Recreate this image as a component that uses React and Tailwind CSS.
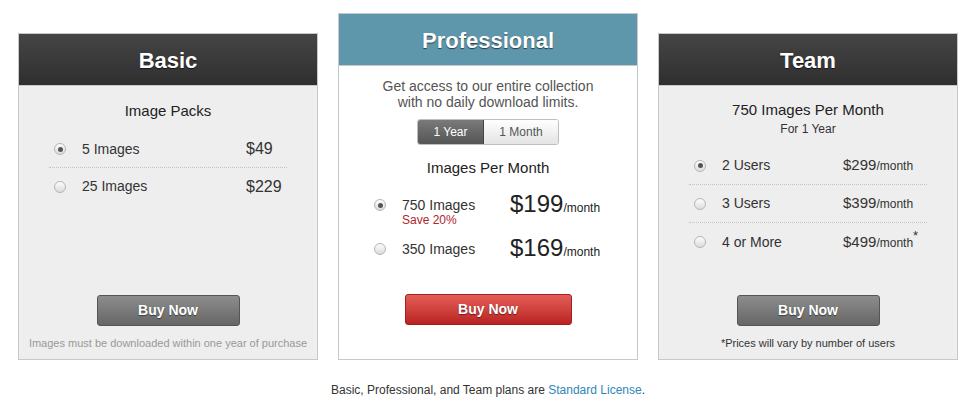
import React from "react";

const Radio = ({ checked }) => (
  <span className="flex h-[12px] w-[12px] items-center justify-center rounded-full border border-[#b5b5b5] bg-gradient-to-b from-[#fdfdfd] to-[#dcdcdc]">
    {checked && <span className="h-[5px] w-[5px] rounded-full bg-[#555]" />}
  </span>
);

const Header = ({ title, blue }) => (
  <div
    className={`flex h-[52px] items-center justify-center border-b border-[#c8c8c8] pt-[2px] text-[22px] font-bold text-white [text-shadow:0_1px_1px_rgba(0,0,0,0.6)] ${
      blue ? "bg-[#5e97ab]" : "bg-gradient-to-b from-[#454545] to-[#2f2f2f]"
    }`}
  >
    {title}
  </div>
);

const BuyButton = ({ red, className = "" }) => (
  <button
    className={`mx-auto flex h-[31px] items-center justify-center rounded-[3px] border text-[14px] font-bold text-white [text-shadow:0_1px_1px_rgba(0,0,0,0.5)] ${
      red
        ? "w-[167px] border-[#a51d1d] bg-gradient-to-b from-[#e45d58] to-[#b92121]"
        : "w-[143px] border-[#555] bg-gradient-to-b from-[#8d8d8d] to-[#666]"
    } ${className}`}
  >
    Buy Now
  </button>
);

const basicRows = [
  { label: "5 Images", price: "$49", checked: true },
  { label: "25 Images", price: "$229" },
];

const teamRows = [
  { label: "2 Users", price: "$299", checked: true },
  { label: "3 Users", price: "$399" },
  { label: "4 or More", price: "$499", star: true },
];

const App = () => {
  return (
    <div className="min-h-screen bg-white font-['Liberation_Sans',Arial,sans-serif] text-[#333]">
      <div className="flex items-end gap-[20px] pl-[18px] pt-[13px]">
        {/* Basic */}
        <div className="flex h-[327px] w-[300px] flex-col border border-[#c8c8c8] bg-[#eeeeee]">
          <Header title="Basic" />
          <div className="flex flex-1 flex-col">
            <p className="mt-[16px] text-center text-[15px] leading-[18px] text-[#222]">
              Image Packs
            </p>
            <div className="mx-[30px] mt-[11px]">
              {basicRows.map((row, i) => (
                <div
                  key={row.label}
                  className={`flex h-[37px] items-center ${
                    i < basicRows.length - 1 ? "border-b border-dotted border-[#c4c4c4]" : ""
                  }`}
                >
                  <span className="w-[33px] pl-[5px]">
                    <Radio checked={row.checked} />
                  </span>
                  <span className="w-[164px] text-[14px]">{row.label}</span>
                  <span className="text-[16px]">{row.price}</span>
                </div>
              ))}
            </div>
            <BuyButton className="mt-auto" />
            <p className="mb-[9px] mt-[11px] text-center text-[11px] leading-[13px] text-[#999]">
              Images must be downloaded within one year of purchase
            </p>
          </div>
        </div>

        {/* Professional */}
        <div className="flex h-[347px] w-[300px] flex-col border border-[#c8c8c8] bg-white">
          <Header title="Professional" blue />
          <div className="flex flex-1 flex-col">
            <p className="mt-[12px] text-center text-[14px] leading-[16px] text-[#555]">
              Get access to our entire collection
              <br />
              with no daily download limits.
            </p>
            <div className="mx-auto mt-[9px] flex h-[26px] w-[142px] overflow-hidden rounded-[3px] border border-[#bdbdbd] text-[12px]">
              <span className="flex w-[66px] items-center justify-center border-r border-[#444] bg-gradient-to-b from-[#7a7a7a] to-[#555] text-white">
                1 Year
              </span>
              <span className="flex flex-1 items-center justify-center bg-gradient-to-b from-[#ffffff] to-[#e4e4e4] text-[#555]">
                1 Month
              </span>
            </div>
            <p className="mt-[14px] text-center text-[15px] leading-[18px] text-[#222]">
              Images Per Month
            </p>
            <div className="ml-[35px] mt-[20px] flex flex-col gap-[14px]">
              <div className="flex items-start">
                <span className="mt-[2px] w-[28px]">
                  <Radio checked />
                </span>
                <div className="w-[108px]">
                  <p className="text-[14px] leading-[16px]">750 Images</p>
                  <p className="text-[12px] leading-[14px] text-[#b2242a]">Save 20%</p>
                </div>
                <p className="-mt-[7px] text-[24px] leading-[28px] text-[#222]">
                  $199<span className="text-[12px]">/month</span>
                </p>
              </div>
              <div className="flex items-start">
                <span className="mt-[2px] w-[28px]">
                  <Radio />
                </span>
                <div className="w-[108px]">
                  <p className="text-[14px] leading-[16px]">350 Images</p>
                </div>
                <p className="-mt-[7px] text-[24px] leading-[28px] text-[#222]">
                  $169<span className="text-[12px]">/month</span>
                </p>
              </div>
            </div>
            <BuyButton red className="mb-[34px] mt-auto" />
          </div>
        </div>

        {/* Team */}
        <div className="flex h-[327px] w-[300px] flex-col border border-[#c8c8c8] bg-[#eeeeee]">
          <Header title="Team" />
          <div className="flex flex-1 flex-col">
            <p className="mt-[15px] text-center text-[15px] leading-[18px] text-[#222]">
              750 Images Per Month
            </p>
            <p className="mt-[3px] text-center text-[12px] leading-[14px]">For 1 Year</p>
            <div className="mx-[30px] mt-[11px]">
              {teamRows.map((row, i) => (
                <div
                  key={row.label}
                  className={`flex h-[38px] items-center ${
                    i < teamRows.length - 1 ? "border-b border-dotted border-[#c4c4c4]" : ""
                  }`}
                >
                  <span className="w-[33px] pl-[5px]">
                    <Radio checked={row.checked} />
                  </span>
                  <span className="w-[121px] text-[14px]">{row.label}</span>
                  <span className="text-[15px]">
                    {row.price}
                    <span className="text-[12px]">/month</span>
                    {row.star && <sup className="text-[13px]">*</sup>}
                  </span>
                </div>
              ))}
            </div>
            <BuyButton className="mt-auto" />
            <p className="mb-[9px] mt-[11px] text-center text-[11px] leading-[13px] text-[#333]">
              *Prices will vary by number of users
            </p>
          </div>
        </div>
      </div>

      <p className="mt-[23px] pl-[18px] pr-[20px] text-center text-[12px] leading-[14px]">
        Basic, Professional, and Team plans are{" "}
        <a className="text-[#2f87b8]">Standard License</a>.
      </p>
    </div>
  );
};

export default App;
